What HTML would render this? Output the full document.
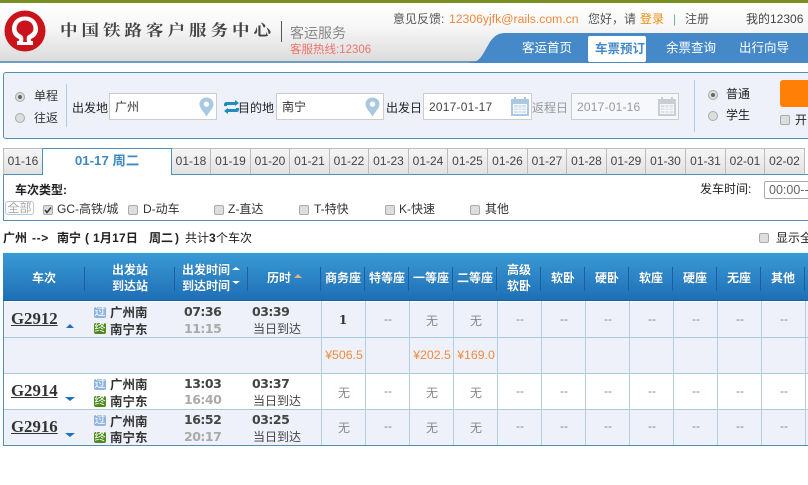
<!DOCTYPE html>
<html lang="zh"><head><meta charset="utf-8"><title>车票预订</title>
<style>
html,body{margin:0;padding:0;background:#fff;width:808px;height:485px;overflow:hidden}
body{position:relative;font-family:"Liberation Sans","Noto Sans CJK SC",sans-serif;font-size:12px;color:#333}
div,span,svg{position:absolute;white-space:nowrap;box-sizing:border-box}
.c{text-align:center}
.h{color:#fff;font-weight:bold;text-align:center;line-height:16px;font-size:12px;text-shadow:0 0 1px #1a5f9c}
.sep{width:1px;height:24px;top:267px;background:#1b5f9e}
.tab{top:148px;height:27px;background:linear-gradient(#f6f6f6,#e2e2e2);border:1px solid #bbb;border-left:0;border-bottom:1px solid #4f90b9;line-height:25px;text-align:center;color:#444;font-size:12px}
.rd{width:10px;height:10px;border-radius:50%;background:#ddd;border:1px solid #aaa}
.rd.on:after{content:"";position:absolute;left:2px;top:2px;width:4px;height:4px;border-radius:50%;background:#666}
.cb{width:10px;height:10px;border-radius:2px;background:#ddd;border:1px solid #aaa}
.inp{top:93px;height:27px;background:#fff;border:1px solid #ccc;line-height:27px;padding-left:5px}
.cell{color:#888;text-align:center;width:44px;font-size:12px}
.no{font:bold 16.8px/18px "Liberation Serif",serif;color:#333;text-decoration:underline;left:11px}
.st{font-weight:bold;font-size:12.5px;color:#333;left:110px}
.tm{font:bold 12.5px "DejaVu Sans",sans-serif;letter-spacing:-.5px;color:#444;left:184px}
.tm2{font:bold 12.5px "DejaVu Sans",sans-serif;letter-spacing:-.5px;color:#aaa;left:184px}
.du{font:bold 12.5px "DejaVu Sans",sans-serif;letter-spacing:-.5px;color:#444;left:252px}
.sm{left:253px;font-size:12px;color:#444}
.bd{left:94px;width:12px;height:11px;border-radius:2px;color:#fff;font-size:11px;line-height:11px;text-align:center}
.pr{color:#f08a3c;font-size:12.3px;text-align:center;width:44px;top:348px}
.vl{width:1px;background:#b5cfde}
.hl{left:3px;width:805px;height:1px;background:#a9cade}
.ln{line-height:16px;color:#222;font-weight:bold;top:230px}
</style></head><body>

<div style="left:0;top:0;width:808px;height:3px;background:#78901f"></div>
<div style="left:0;top:3px;width:808px;height:58px;background:linear-gradient(#fff,#f7f7f7 40%,#dcdcdc)"></div>
<div style="left:0;top:61px;width:808px;height:2px;background:#6c9cc4"></div>

<svg style="left:4px;top:10px" width="43" height="43" viewBox="0 0 43 43">
<circle cx="21" cy="21" r="20.500" fill="#c9141c"/>
<path d="M21 6.500 C12 6.500 8 13 8 19 C8 24 11 27 14 28.500 C16 29.500 15.500 31 14 31 L13 31 L13 35 L29 35 L29 31 L28 31 C26.500 31 26 29.500 28 28.500 C31 27 34 24 34 19 C34 13 30 6.500 21 6.500Z" fill="#fff"/>
<path d="M21 10.500 C15.500 10.500 12.500 14.500 12.500 18.500 C12.500 22.500 16 24 18 25.500 C19.500 26.500 19.500 29 19 32 L23 32 C22.500 29 22.500 26.500 24 25.500 C26 24 29.500 22.500 29.500 18.500 C29.500 14.500 26.500 10.500 21 10.500Z" fill="#c9141c"/>
</svg>
<div style="left:60px;top:19px;font:bold 17.500px/22px 'Noto Serif CJK SC','Noto Sans CJK SC',serif;letter-spacing:4px;color:#444;transform:scaleY(.88);transform-origin:0 50%">中国铁路客户服务中心</div>
<div style="left:281px;top:21px;width:1px;height:21px;background:#555"></div>
<div style="left:290px;top:23px;font-size:14px;color:#888;line-height:20px">客运服务</div>
<div style="left:290px;top:42px;font-size:11.500px;color:#f0736a;line-height:16px">客服热线:12306</div>

<div style="left:393px;top:11px;color:#555;line-height:16px">意见反馈:</div>
<div style="left:449px;top:11px;color:#f0883c;line-height:16px;font-size:12.200px">12306yjfk@rails.com.cn</div>
<div style="left:588px;top:11px;color:#555;line-height:16px">您好，请</div>
<div style="left:640px;top:11px;color:#ef8a10;line-height:16px">登录</div>
<div style="left:673px;top:11px;color:#7aa;line-height:16px">|</div>
<div style="left:685px;top:11px;color:#555;line-height:16px">注册</div>
<div style="left:746px;top:11px;color:#444;line-height:16px">我的12306</div>

<svg style="left:470px;top:33px" width="338" height="30" viewBox="0 0 338 30"><path d="M0 29 L2 29 C9 29 12 23 17 14 C22 5 26 0 36 0 L338 0 L338 30 L0 30 Z" fill="#4689c9"/></svg>
<div style="left:522px;top:40px;color:#fff;font-size:12.500px;line-height:16px">客运首页</div>
<div style="left:588px;top:36px;width:58px;height:26px;background:#fff;border-radius:2px;color:#4689c9;font-weight:bold;font-size:12.500px;line-height:26px;padding-left:7px">车票预订</div>
<div style="left:666px;top:40px;color:#fff;font-size:12.500px;line-height:16px">余票查询</div>
<div style="left:739px;top:40px;color:#fff;font-size:12.500px;line-height:16px">出行向导</div>

<div style="left:3px;top:72px;width:820px;height:67px;background:#eef1f9;border:1px solid #4f90b9;border-radius:3px"></div>
<div class="rd on" style="left:15px;top:92px"></div>
<div class="rd" style="left:15px;top:113px"></div>
<div style="left:34px;top:88px;line-height:16px">单程</div>
<div style="left:34px;top:110px;line-height:16px">往返</div>
<div style="left:66px;top:84px;width:1px;height:43px;background:#a9cfe4"></div>
<div style="left:72px;top:100px;line-height:16px;color:#222">出发地</div>
<div class="inp" style="left:109px;width:108px">广州</div>
<svg style="left:199px;top:97px" width="15" height="20" viewBox="0 0 15 20"><path fill-rule="evenodd" d="M7.500 0.500 C3.500 0.500 0.500 3.500 0.500 7 C0.500 11.500 5 15 7.500 19.500 C10 15 14.500 11.500 14.500 7 C14.500 3.500 11.500 0.500 7.500 0.500Z M7.500 4.500 A2.700 2.700 0 1 1 7.490 4.500Z" fill="#a9c9e2"/></svg>
<svg style="left:224px;top:100px" width="15" height="14" viewBox="0 0 15 14"><path d="M0 5 C0 2 2 2 3 2 L11 2 L11 0 L15 3 L11 6 L11 5 L3 5 L3 6 L0 6Z M15 9 C15 12 13 12 12 12 L4 12 L4 14 L0 11 L4 8 L4 9 L12 9 L12 8 L15 8Z" fill="#1f8dbd"/></svg>
<div style="left:238px;top:100px;line-height:16px;color:#222">目的地</div>
<div class="inp" style="left:276px;width:108px">南宁</div>
<svg style="left:365px;top:97px" width="15" height="20" viewBox="0 0 15 20"><path fill-rule="evenodd" d="M7.500 0.500 C3.500 0.500 0.500 3.500 0.500 7 C0.500 11.500 5 15 7.500 19.500 C10 15 14.500 11.500 14.500 7 C14.500 3.500 11.500 0.500 7.500 0.500Z M7.500 4.500 A2.700 2.700 0 1 1 7.490 4.500Z" fill="#a9c9e2"/></svg>
<div style="left:386px;top:100px;line-height:16px;color:#222">出发日</div>
<div class="inp" style="left:423px;width:109px;color:#444;letter-spacing:.2px">2017-01-17</div>
<svg style="left:511px;top:97px" width="18" height="19" viewBox="0 0 18 19"><path fill-rule="evenodd" d="M0 2 H3 V0 H5 V2 H13 V0 H15 V2 H18 V19 H0Z M2 7 V17 H16 V7Z" fill="#a9c9e2"/><path d="M3 8 H15 V16 H3Z" fill="#cfe0ee"/><path d="M7 8 V16 M11 8 V16 M3 11 H15 M3 13.500 H15" stroke="#fff" stroke-width=".8"/></svg>
<div style="left:532px;top:100px;line-height:16px;color:#999">返程日</div>
<div class="inp" style="left:571px;width:108px;color:#999;background:#f7f8fb;letter-spacing:.2px">2017-01-16</div>
<svg style="left:658px;top:97px" width="18" height="19" viewBox="0 0 18 19"><path fill-rule="evenodd" d="M0 2 H3 V0 H5 V2 H13 V0 H15 V2 H18 V19 H0Z M2 7 V17 H16 V7Z" fill="#c8cdd6"/><path d="M3 8 H15 V16 H3Z" fill="#dde0e6"/><path d="M7 8 V16 M11 8 V16 M3 11 H15 M3 13.500 H15" stroke="#fff" stroke-width=".8"/></svg>
<div style="left:694px;top:80px;width:1px;height:52px;background:#a9cfe4"></div>
<div class="rd on" style="left:708px;top:90px"></div>
<div class="rd" style="left:708px;top:111px"></div>
<div style="left:726px;top:86px;line-height:16px;color:#222">普通</div>
<div style="left:726px;top:107px;line-height:16px;color:#222">学生</div>
<div style="left:780px;top:80px;width:40px;height:27px;background:#ff7f07;border-radius:3px"></div>
<div class="cb" style="left:780px;top:115px"></div>
<div style="left:795px;top:112px;line-height:16px;color:#222">开</div>

<div style="left:3px;top:174px;width:805px;height:47px;border:1px solid #4f90b9;border-top:0;border-right:0"></div>
<div style="left:3px;top:174px;width:805px;height:1px;background:#4f90b9"></div>
<div class="tab" style="left:3px;width:40px;border-left:1px solid #bbb">01-16</div>
<div style="left:42px;top:148px;width:130px;height:27px;background:#fff;border:1px solid #4f90b9;border-bottom:0;color:#3e8ac0;font-weight:bold;text-align:center;line-height:23px;font-size:13.300px">01-17 周二</div>
<div class="tab" style="left:172px;width:39px">01-18</div>
<div class="tab" style="left:211px;width:40px">01-19</div>
<div class="tab" style="left:251px;width:39px">01-20</div>
<div class="tab" style="left:290px;width:40px">01-21</div>
<div class="tab" style="left:330px;width:39px">01-22</div>
<div class="tab" style="left:369px;width:40px">01-23</div>
<div class="tab" style="left:409px;width:39px">01-24</div>
<div class="tab" style="left:448px;width:40px">01-25</div>
<div class="tab" style="left:488px;width:40px">01-26</div>
<div class="tab" style="left:528px;width:39px">01-27</div>
<div class="tab" style="left:567px;width:40px">01-28</div>
<div class="tab" style="left:607px;width:39px">01-29</div>
<div class="tab" style="left:646px;width:40px">01-30</div>
<div class="tab" style="left:686px;width:40px">01-31</div>
<div class="tab" style="left:726px;width:39px">02-01</div>
<div class="tab" style="left:765px;width:40px">02-02</div>

<div style="left:15px;top:182px;font-weight:bold;line-height:16px;color:#222">车次类型:</div>
<div style="left:5px;top:201px;width:29px;height:14px;border:1px solid #b9c6da;border-radius:3px;color:#aaa;line-height:12px;text-align:center">全部</div>
<div class="cb" style="left:43px;top:205px"></div>
<svg style="left:44px;top:206px" width="8" height="8" viewBox="0 0 8 8"><path d="M1 4 L3 6.500 L7 1.500" stroke="#333" stroke-width="1.500" fill="none"/></svg>
<div style="left:57px;top:201px;line-height:16px">GC-高铁/城</div>
<div class="cb" style="left:128px;top:205px"></div><div style="left:143px;top:201px;line-height:16px">D-动车</div>
<div class="cb" style="left:214px;top:205px"></div><div style="left:228px;top:201px;line-height:16px">Z-直达</div>
<div class="cb" style="left:299px;top:205px"></div><div style="left:314px;top:201px;line-height:16px">T-特快</div>
<div class="cb" style="left:385px;top:205px"></div><div style="left:399px;top:201px;line-height:16px">K-快速</div>
<div class="cb" style="left:470px;top:205px"></div><div style="left:485px;top:201px;line-height:16px">其他</div>
<div style="left:700px;top:181px;line-height:16px;color:#222">发车时间:</div>
<div style="left:764px;top:181px;width:60px;height:18px;border:1px solid #aaa;border-radius:2px;line-height:16px;padding-left:4px;color:#666;font-size:12.500px">00:00--</div>

<div class="ln" style="left:3px">广州</div>
<div class="ln" style="left:32px;letter-spacing:.6px">--&gt;</div>
<div class="ln" style="left:57px">南宁</div>
<div class="ln" style="left:85px">(</div>
<div class="ln" style="left:93px;letter-spacing:.2px">1月17日</div>
<div class="ln" style="left:149px">周二</div>
<div class="ln" style="left:175px">)</div>
<div class="ln" style="left:185px;font-weight:normal">共计</div>
<div class="ln" style="left:209px">3</div>
<div class="ln" style="left:216px;font-weight:normal">个车次</div>
<div class="cb" style="left:759px;top:233px"></div>
<div style="left:776px;top:230px;line-height:16px;color:#222">显示全</div>

<div style="left:3px;top:252px;width:805px;height:1px;background:#e4fbfb"></div>
<div style="left:3px;top:253px;width:805px;height:48px;background:linear-gradient(#3a9ad6,#1e6fb5);border-bottom:1px solid #15609f"></div>
<div class="sep" style="left:84px"></div><div class="sep" style="left:174px"></div><div class="sep" style="left:247px"></div><div class="sep" style="left:320px"></div>
<div class="sep" style="left:364px"></div><div class="sep" style="left:408px"></div><div class="sep" style="left:452px"></div><div class="sep" style="left:496px"></div><div class="sep" style="left:540px"></div><div class="sep" style="left:584px"></div><div class="sep" style="left:628px"></div><div class="sep" style="left:672px"></div><div class="sep" style="left:716px"></div><div class="sep" style="left:760px"></div><div class="sep" style="left:804px"></div>
<div class="h" style="left:32px;top:270px">车次</div>
<div class="h" style="left:112px;top:262px">出发站<br>到达站</div>
<div class="h" style="left:182px;top:262px;text-align:left">出发时间<br>到达时间</div>
<svg style="left:231px;top:266px" width="10" height="20" viewBox="0 0 10 20"><path d="M1 4 L5 1 L9 4Z M1 15 L9 15 L5 18Z" fill="#fff"/></svg>
<div class="h" style="left:267px;top:270px">历时</div>
<svg style="left:293px;top:273px" width="10" height="6" viewBox="0 0 10 6"><path d="M1 5 L5 1 L9 5Z" fill="#d9b48a"/></svg>
<div class="h" style="left:321px;top:270px;width:44px">商务座</div>
<div class="h" style="left:365px;top:270px;width:44px">特等座</div>
<div class="h" style="left:409px;top:270px;width:44px">一等座</div>
<div class="h" style="left:453px;top:270px;width:44px">二等座</div>
<div class="h" style="left:497px;top:262px;width:44px">高级<br>软卧</div>
<div class="h" style="left:541px;top:270px;width:44px">软卧</div>
<div class="h" style="left:585px;top:270px;width:44px">硬卧</div>
<div class="h" style="left:629px;top:270px;width:44px">软座</div>
<div class="h" style="left:673px;top:270px;width:44px">硬座</div>
<div class="h" style="left:717px;top:270px;width:44px">无座</div>
<div class="h" style="left:761px;top:270px;width:44px">其他</div>

<div style="left:4px;top:302px;width:804px;height:71px;background:#eef1f9"></div>
<div style="left:4px;top:410px;width:804px;height:35px;background:#eef1f9"></div>
<div class="hl" style="top:337px"></div><div class="hl" style="top:373px"></div><div class="hl" style="top:409px"></div>
<div style="left:3px;top:445px;width:805px;height:1px;background:#4f90b9"></div>
<div style="left:3px;top:301px;width:1px;height:145px;background:#4f90b9"></div>
<div class="vl" style="left:321px;top:301px;height:144px"></div><div class="vl" style="left:365px;top:301px;height:144px"></div><div class="vl" style="left:409px;top:301px;height:144px"></div><div class="vl" style="left:453px;top:301px;height:144px"></div><div class="vl" style="left:497px;top:301px;height:144px"></div><div class="vl" style="left:541px;top:301px;height:144px"></div><div class="vl" style="left:585px;top:301px;height:144px"></div><div class="vl" style="left:629px;top:301px;height:144px"></div><div class="vl" style="left:673px;top:301px;height:144px"></div><div class="vl" style="left:717px;top:301px;height:144px"></div><div class="vl" style="left:761px;top:301px;height:144px"></div><div class="vl" style="left:805px;top:301px;height:144px"></div>

<div class="no" style="top:310px">G2912</div>
<svg style="left:65px;top:323px" width="10" height="6"><path d="M1 5 L5 1 L9 5Z" fill="#1d6fc0"/></svg>
<div class="bd" style="top:307px;background:#8fb4e0">过</div><div class="st" style="top:302px">广州南</div>
<div class="bd" style="top:323px;background:#4f8a1f">终</div><div class="st" style="top:319px">南宁东</div>
<div class="tm" style="top:304px">07:36</div><div class="tm2" style="top:321px">11:15</div>
<div class="du" style="top:304px">03:39</div><div class="sm" style="top:320px">当日到达</div>
<div class="c" style="left:321px;top:313px;width:44px;font:bold 12px 'DejaVu Serif',serif;color:#333">1</div>

<div class="no" style="top:382px">G2914</div>
<svg style="left:64px;top:396px" width="12" height="6"><path d="M1 1 L11 1 L6 5Z" fill="#1d6fc0"/></svg>
<div class="bd" style="top:379px;background:#8fb4e0">过</div><div class="st" style="top:374px">广州南</div>
<div class="bd" style="top:396px;background:#4f8a1f">终</div><div class="st" style="top:391px">南宁东</div>
<div class="tm" style="top:376px">13:03</div><div class="tm2" style="top:392px">16:40</div>
<div class="du" style="top:376px">03:37</div><div class="sm" style="top:392px">当日到达</div>

<div class="no" style="top:418px">G2916</div>
<svg style="left:64px;top:432px" width="12" height="6"><path d="M1 1 L11 1 L6 5Z" fill="#1d6fc0"/></svg>
<div class="bd" style="top:415px;background:#8fb4e0">过</div><div class="st" style="top:411px">广州南</div>
<div class="bd" style="top:432px;background:#4f8a1f">终</div><div class="st" style="top:427px">南宁东</div>
<div class="tm" style="top:412px">16:52</div><div class="tm2" style="top:429px">20:17</div>
<div class="du" style="top:412px">03:25</div><div class="sm" style="top:428px">当日到达</div>

<div class="pr" style="left:322px">¥506.5</div><div class="pr" style="left:410px">¥202.5</div><div class="pr" style="left:454px">¥169.0</div>

<div class="cell" style="left:366px;top:312px">--</div><div class="cell" style="left:410px;top:312px">无</div><div class="cell" style="left:454px;top:312px">无</div><div class="cell" style="left:498px;top:312px">--</div><div class="cell" style="left:542px;top:312px">--</div><div class="cell" style="left:586px;top:312px">--</div><div class="cell" style="left:630px;top:312px">--</div><div class="cell" style="left:674px;top:312px">--</div><div class="cell" style="left:718px;top:312px">--</div><div class="cell" style="left:762px;top:312px">--</div>
<div class="cell" style="left:322px;top:384px">无</div><div class="cell" style="left:366px;top:384px">--</div><div class="cell" style="left:410px;top:384px">无</div><div class="cell" style="left:454px;top:384px">无</div><div class="cell" style="left:498px;top:384px">--</div><div class="cell" style="left:542px;top:384px">--</div><div class="cell" style="left:586px;top:384px">--</div><div class="cell" style="left:630px;top:384px">--</div><div class="cell" style="left:674px;top:384px">--</div><div class="cell" style="left:718px;top:384px">--</div><div class="cell" style="left:762px;top:384px">--</div>
<div class="cell" style="left:322px;top:419px">无</div><div class="cell" style="left:366px;top:419px">--</div><div class="cell" style="left:410px;top:419px">无</div><div class="cell" style="left:454px;top:419px">无</div><div class="cell" style="left:498px;top:419px">--</div><div class="cell" style="left:542px;top:419px">--</div><div class="cell" style="left:586px;top:419px">--</div><div class="cell" style="left:630px;top:419px">--</div><div class="cell" style="left:674px;top:419px">--</div><div class="cell" style="left:718px;top:419px">--</div><div class="cell" style="left:762px;top:419px">--</div>
</body></html>
